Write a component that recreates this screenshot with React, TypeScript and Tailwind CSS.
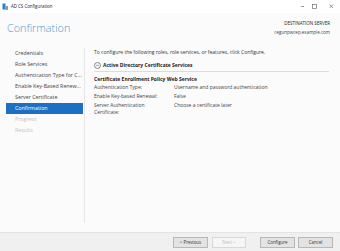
import React from 'react';

const navItems = [
  { label: 'Credentials', state: 'done' },
  { label: 'Role Services', state: 'done' },
  { label: 'Authentication Type for C...', state: 'done' },
  { label: 'Enable Key-Based Renew...', state: 'done' },
  { label: 'Server Certificate', state: 'done' },
  { label: 'Confirmation', state: 'active' },
  { label: 'Progress', state: 'disabled' },
  { label: 'Results', state: 'disabled' },
];

const details = [
  { label: ['Authentication Type:'], value: 'Username and password authentication' },
  { label: ['Enable Key-based Renewal:'], value: 'False' },
  { label: ['Server Authentication', 'Certificate:'], value: 'Choose a certificate later' },
];

const App: React.FC = () => {
  return (
    <div className="w-[340px] h-[251px] flex flex-col bg-[#fbfbfb] font-['Open_Sans',sans-serif] text-[#333] overflow-hidden">
      {/* title bar */}
      <div className="h-[13px] flex items-center bg-white pl-[2px] pr-[5px]">
        <svg width="6" height="7" viewBox="0 0 6 7" className="shrink-0">
          <rect x="0.5" y="0.5" width="3" height="6" fill="#2f7fd0" />
          <rect x="3.5" y="3" width="2.5" height="4" fill="#8a9bb0" />
        </svg>
        <span className="ml-[3px] text-[4.4px] leading-none text-[#222]">AD CS Configuration</span>
        <div className="flex-1" />
        <svg width="36" height="7" viewBox="0 0 36 7" className="shrink-0">
          <line x1="2" y1="3.5" x2="5" y2="3.5" stroke="#555" strokeWidth="0.6" />
          <rect x="13.5" y="1.5" width="4" height="4" fill="none" stroke="#555" strokeWidth="0.6" />
          <path d="M30.5 1.5 L34 5 M34 1.5 L30.5 5" stroke="#555" strokeWidth="0.6" />
        </svg>
      </div>

      {/* header */}
      <div className="h-[35px] flex justify-between items-start px-[7px]">
        <h1 className="mt-[10px] text-[10.8px] leading-none font-light text-[#4f9bcc]">Confirmation</h1>
        <div className="mt-[6px] mr-[3px] flex flex-col items-end text-[4.5px] leading-[9px]">
          <span className="text-[#222]">DESTINATION SERVER</span>
          <span className="text-[#444]">cegunpwcep.example.com</span>
        </div>
      </div>

      {/* body */}
      <div className="flex-1 flex pb-[9px]">
        <nav className="w-[85px] shrink-0 border-r border-[#e6e6e6] pl-[6px] pr-[1px]">
          {navItems.map((item) => (
            <div
              key={item.label}
              className={
                item.state === 'active'
                  ? 'h-[11px] flex items-center pl-[9px] text-[5.3px] whitespace-nowrap bg-[#1c6fc1] text-white'
                  : item.state === 'disabled'
                  ? 'h-[11px] flex items-center pl-[9px] text-[5.3px] whitespace-nowrap text-[#c4c4c4]'
                  : 'h-[11px] flex items-center pl-[9px] text-[5.3px] whitespace-nowrap text-[#444]'
              }
            >
              {item.label}
            </div>
          ))}
        </nav>

        <div className="flex-1 pl-[9px] pr-[11px] text-[5px] leading-[6.5px]">
          <p className="mt-[1px] text-[#333] whitespace-nowrap">
            To configure the following roles, role services, or features, click Configure.
          </p>

          <div className="mt-[6px] flex items-center gap-[2px] pb-[2px] border-b border-[#dcdcdc]">
            <svg width="7" height="7" viewBox="0 0 7 7" className="shrink-0">
              <circle cx="3.5" cy="3.5" r="3" fill="none" stroke="#444" strokeWidth="0.6" />
              <path d="M2.2 4.2 L3.5 2.8 L4.8 4.2" fill="none" stroke="#444" strokeWidth="0.6" />
            </svg>
            <span className="font-bold text-[#222]">Active Directory Certificate Services</span>
          </div>

          <div className="mt-[4px] font-bold text-[#222]">Certificate Enrollment Policy Web Service</div>

          <div className="mt-[2px] flex flex-col gap-[2.5px]">
            {details.map((row) => (
              <div key={row.value} className="flex text-[#444]">
                <div className="w-[80px] shrink-0">
                  {row.label.map((l) => (
                    <div key={l}>{l}</div>
                  ))}
                </div>
                <div>{row.value}</div>
              </div>
            ))}
          </div>
        </div>
      </div>

      {/* footer */}
      <div className="h-[19px] shrink-0 bg-[#f0f0f0] border-t border-[#e4e4e4] flex items-center justify-end pr-[7px] pt-[1px]">
        <button className="w-[35px] h-[11px] bg-[#e3e3e3] border border-[#b8b8b8] text-[4.4px] leading-none text-[#333]">
          &lt; Previous
        </button>
        <button className="ml-[4px] w-[34px] h-[11px] bg-[#f6f6f6] border border-[#d8d8d8] text-[4.4px] leading-none text-[#bcbcbc]">
          Next &gt;
        </button>
        <button className="ml-[14px] w-[35px] h-[11px] bg-[#e3e3e3] border border-[#b8b8b8] text-[4.4px] leading-none text-[#333]">
          Configure
        </button>
        <button className="ml-[3px] w-[35px] h-[11px] bg-[#e3e3e3] border border-[#b8b8b8] text-[4.4px] leading-none text-[#333]">
          Cancel
        </button>
      </div>
    </div>
  );
};

export default App;
